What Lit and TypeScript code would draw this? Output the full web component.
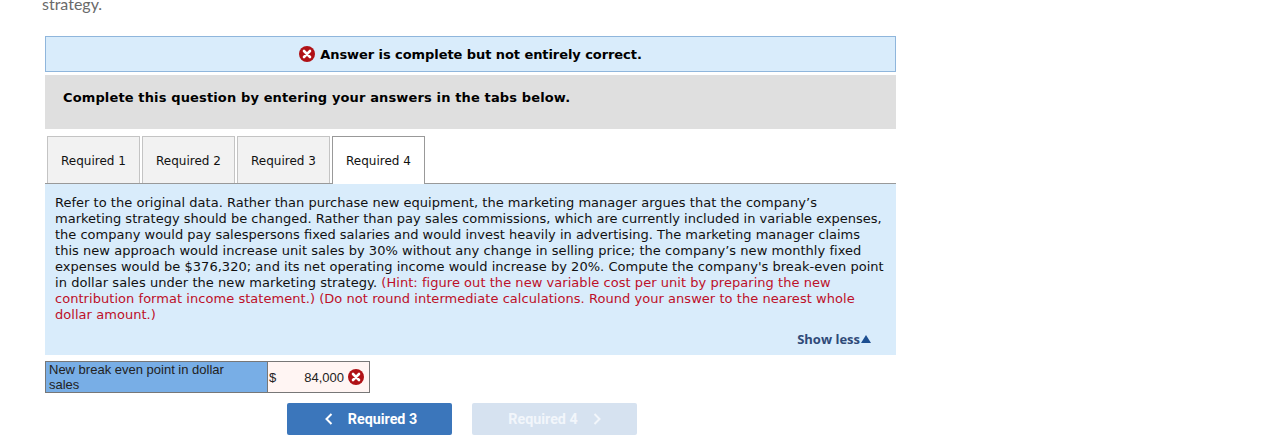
import { LitElement, html, css, svg } from "lit";
import { customElement } from "lit/decorators.js";

const xIcon = () => html`<svg class="x" width="16" height="16" viewBox="0 0 16 16">
  <circle cx="8" cy="8" r="8" fill="#b01116"></circle>
  ${svg`<path d="M5 5 L11 11 M11 5 L5 11" stroke="#fff" stroke-width="2.6" stroke-linecap="round" fill="none"></path>`}
</svg>`;

@customElement("app-root")
export class AppRoot extends LitElement {
  static styles = css`
    :host { display: block; width: 1263px; height: 439px; overflow: hidden; background: #fff; }
    .clip { height: 36px; padding-left: 42px; box-sizing: border-box; overflow: hidden; }
    .top { font: 400 16px/15px Lato, sans-serif; color: #6a6a6a; margin-top: -4px; }
    .wrap { margin-left: 45px; width: 851px; font-family: "DejaVu Sans", Verdana, sans-serif; color: #000; }
    .banner { height: 36px; box-sizing: border-box; border: 1px solid #8fb6dc; background: #d9ecfb;
      display: flex; align-items: center; justify-content: center; gap: 5px; font-weight: 700; font-size: 13px; letter-spacing: -0.07px; }
    .x { display: block; flex: none; }
    .grey { margin-top: 3px; height: 54px; background: #dfdfdf; font-weight: 700; font-size: 13px; line-height: 16px; letter-spacing: 0.135px; padding: 15px 18px 0; box-sizing: border-box; }
    .tabs { margin-top: 7px; height: 48px; box-sizing: border-box; border-bottom: 1px solid #999; display: flex; gap: 2px; padding-left: 2px; }
    .tab { width: 93px; height: 47px; box-sizing: border-box; border: 1px solid #c4c4c4; border-bottom: none; background: #f2f2f2;
      font-size: 12px; display: flex; align-items: center; justify-content: center; padding-top: 2px; color: #111; }
    .tab.on { background: #fff; border-color: #999; height: 48px; padding-top: 1px; }
    .panel { background: #d9ecfb; height: 171px; box-sizing: border-box; padding: 11px 10px 0; font-size: 13px; line-height: 16px; color: #111; }
    .panel p { margin: 0; white-space: nowrap; letter-spacing: 0.02px; }
    .panel p.tight { letter-spacing: 0; }
    .panel p.wide { letter-spacing: 0.035px; }
    .panel p.lead { letter-spacing: 0.05px; }
    .panel .red { color: #bd1029; letter-spacing: 0.045px; }
    .more { margin-top: 8px; padding-right: 15px; display: flex; justify-content: flex-end; align-items: center; gap: 1px; font: 700 13px/16px "Open Sans", sans-serif; color: #2f4a78; }
    .tri { width: 0; height: 0; border-left: 5px solid transparent; border-right: 5px solid transparent; border-bottom: 8px solid #1d4f91; }
    .row { margin-top: 6px; width: 325px; height: 32px; box-sizing: border-box; border: 1px solid #777; display: flex; font: 13px/15px "Liberation Sans", Arial, sans-serif; color: #222; }
    .label { width: 222px; box-sizing: border-box; background: #78aee6; border-right: 1px solid #777; padding: 0 30px 0 3px; display: flex; align-items: center; }
    .val { flex: 1; background: #fff5f3; display: flex; align-items: center; padding: 0 5px 0 1px; }
    .num { flex: 1; text-align: right; padding-right: 4px; }
    .btns { margin-top: 10px; display: flex; gap: 20px; padding-left: 242px; }
    .btn { width: 165px; height: 32px; box-sizing: border-box; border-radius: 2px; display: flex; align-items: center; justify-content: center; gap: 15px;
      font: 700 14.3px Roboto, sans-serif; color: #fff; background: #3b76bb; padding-left: 3px; }
    .btn.off { background: #d6e2f0; color: #f2f6fb; padding-left: 0; }
    .chev { display: block; flex: none; }
  `;

  render() {
    return html`
      <div class="clip"><div class="top">strategy.</div></div>
      <div class="wrap">
        <div class="banner">${xIcon()}<span>Answer is complete but not entirely correct.</span></div>
        <div class="grey">Complete this question by entering your answers in the tabs below.</div>
        <div class="tabs">
          <div class="tab">Required 1</div>
          <div class="tab">Required 2</div>
          <div class="tab">Required 3</div>
          <div class="tab on">Required 4</div>
        </div>
        <div class="panel">
          <p>Refer to the original data. Rather than purchase new equipment, the marketing manager argues that the company’s</p>
          <p class="tight">marketing strategy should be changed. Rather than pay sales commissions, which are currently included in variable expenses,</p>
          <p class="tight">the company would pay salespersons fixed salaries and would invest heavily in advertising. The marketing manager claims</p>
          <p class="wide">this new approach would increase unit sales by 30% without any change in selling price; the company’s new monthly fixed</p>
          <p class="wide">expenses would be $376,320; and its net operating income would increase by 20%. Compute the company's break-even point</p>
          <p class="lead">in dollar sales under the new marketing strategy. <span class="red">(Hint: figure out the new variable cost per unit by preparing the new</span></p>
          <p class="red">contribution format income statement.) (Do not round intermediate calculations. Round your answer to the nearest whole</p>
          <p class="red">dollar amount.)</p>
          <div class="more"><span>Show less</span><span class="tri"></span></div>
        </div>
        <div class="row">
          <div class="label">New break even point in dollar sales</div>
          <div class="val"><span>$</span><span class="num">84,000</span>${xIcon()}</div>
        </div>
        <div class="btns">
          <div class="btn">
            <svg class="chev" width="8" height="12" viewBox="0 0 8 12"><path d="M6.5 1 L1.5 6 L6.5 11" fill="none" stroke="#fff" stroke-width="2"></path></svg>
            <span>Required 3</span>
          </div>
          <div class="btn off">
            <span>Required 4</span>
            <svg class="chev" width="8" height="12" viewBox="0 0 8 12"><path d="M1.5 1 L6.5 6 L1.5 11" fill="none" stroke="#f2f6fb" stroke-width="2"></path></svg>
          </div>
        </div>
      </div>
    `;
  }
}
